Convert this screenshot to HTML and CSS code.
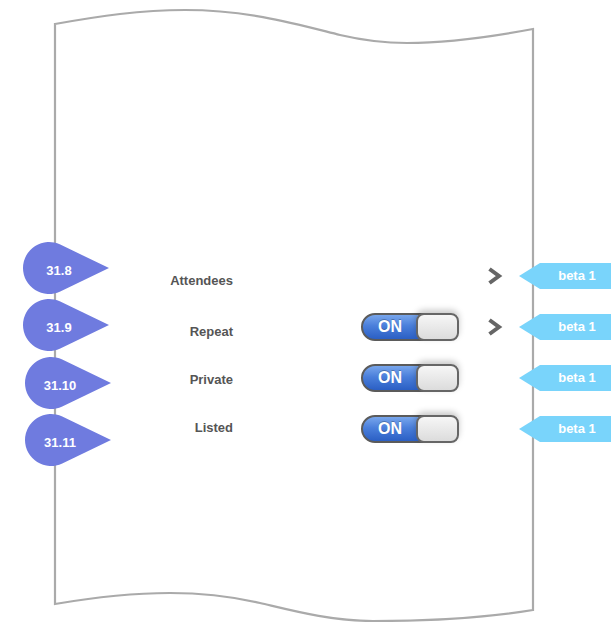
FILE: index.html
```html
<!DOCTYPE html>
<html lang="en">
<head>
<meta charset="utf-8">
<title>Event settings</title>
<link rel="stylesheet" href="styles.css">
</head>
<body>
<div class="canvas">
  <svg class="paper" width="611" height="622" viewBox="0 0 611 622" aria-hidden="true">
    <path d="M55,24 C100,16 140,10 185,10 C250,10 300,25 340,35 C370,42 390,43 407,43 C450,43 490,37 533,29 L533,610 C490,617 440,621 373,621 C330,621 290,610 260,603 C230,596 200,593 170,593 C130,593 90,598 55,604 Z" fill="#fff" stroke="#aaaaaa" stroke-width="2.2"/>
  </svg>

  <div class="rows">
    <div class="row">
      <span class="label label-r1">Attendees</span>
      <svg class="chevron" width="16" height="18" viewBox="0 0 16 18"><polyline points="2.5,2 12,9 2.5,16" fill="none" stroke="#666" stroke-width="4"/></svg>
      <span class="tag"><svg width="92" height="26" viewBox="0 0 92 26"><polygon points="0,13 21,0 92,0 92,26 21,26" fill="#79d4fb"/></svg><span class="tag-text">beta 1</span></span>
    </div>
    <div class="row">
      <span class="label label-r2">Repeat</span>
      <span class="toggle"><span class="toggle-on">ON</span><span class="knob"></span></span>
      <svg class="chevron" width="16" height="18" viewBox="0 0 16 18"><polyline points="2.5,2 12,9 2.5,16" fill="none" stroke="#666" stroke-width="4"/></svg>
      <span class="tag"><svg width="92" height="26" viewBox="0 0 92 26"><polygon points="0,13 21,0 92,0 92,26 21,26" fill="#79d4fb"/></svg><span class="tag-text">beta 1</span></span>
    </div>
    <div class="row">
      <span class="label label-r3">Private</span>
      <span class="toggle"><span class="toggle-on">ON</span><span class="knob"></span></span>
      <span class="tag"><svg width="92" height="26" viewBox="0 0 92 26"><polygon points="0,13 21,0 92,0 92,26 21,26" fill="#79d4fb"/></svg><span class="tag-text">beta 1</span></span>
    </div>
    <div class="row">
      <span class="label label-r4">Listed</span>
      <span class="toggle"><span class="toggle-on">ON</span><span class="knob"></span></span>
      <span class="tag"><svg width="92" height="26" viewBox="0 0 92 26"><polygon points="0,13 21,0 92,0 92,26 21,26" fill="#79d4fb"/></svg><span class="tag-text">beta 1</span></span>
    </div>
  </div>

  <svg class="drop drop-1" width="90" height="54" viewBox="0 0 90 54"><path d="M87,27 L38.27,3.57 A26,26 0 1 0 38.27,50.43 Z" fill="#6f7bdf"/><text x="37" y="33.5" text-anchor="middle">31.8</text></svg>
  <svg class="drop drop-2" width="90" height="54" viewBox="0 0 90 54"><path d="M87,27 L38.27,3.57 A26,26 0 1 0 38.27,50.43 Z" fill="#6f7bdf"/><text x="37" y="33.5" text-anchor="middle">31.9</text></svg>
  <svg class="drop drop-3" width="90" height="54" viewBox="0 0 90 54"><path d="M87,27 L38.27,3.57 A26,26 0 1 0 38.27,50.43 Z" fill="#6f7bdf"/><text x="36" y="33.5" text-anchor="middle">31.10</text></svg>
  <svg class="drop drop-4" width="90" height="54" viewBox="0 0 90 54"><path d="M87,27 L38.27,3.57 A26,26 0 1 0 38.27,50.43 Z" fill="#6f7bdf"/><text x="36" y="33.5" text-anchor="middle">31.11</text></svg>
</div>
</body>
</html>
```

FILE: styles.css
```css
html, body {
  margin: 0;
  padding: 0;
  background: #fff;
}

body {
  font-family: "Liberation Sans", Arial, sans-serif;
}

.canvas {
  position: relative;
  width: 611px;
  height: 622px;
  overflow: hidden;
}

.paper {
  position: absolute;
  left: 0;
  top: 0;
  z-index: 0;
}

.rows {
  position: relative;
  z-index: 1;
  padding-top: 251px;
  display: flex;
  flex-direction: column;
  gap: 1px;
}

.row {
  display: grid;
  grid-template-columns: 233px 128px 98px 28px 16px 16px 92px;
  height: 50px;
  align-items: center;
}

.label {
  grid-column: 1;
  justify-self: end;
  font-size: 13px;
  font-weight: bold;
  color: #555;
}

.label-r1 { padding-top: 8px; }
.label-r2 { padding-top: 9px; }
.label-r3 { padding-top: 3px; }
.label-r4 { padding-bottom: 3px; }

.toggle {
  grid-column: 3;
  position: relative;
  display: flex;
  align-items: center;
  box-sizing: border-box;
  width: 98px;
  height: 28px;
  border: 2px solid #5b5b5b;
  border-radius: 14px;
  background: linear-gradient(#78a6ec 0%, #4a7fdb 45%, #2b5fc4 100%);
}

.toggle-on {
  padding-left: 15px;
  font-size: 16px;
  font-weight: bold;
  color: #fff;
  text-shadow: 0 -1px 0 rgba(0, 0, 0, 0.25);
}

.knob {
  position: absolute;
  right: -2px;
  top: -2px;
  box-sizing: border-box;
  width: 43px;
  height: 28px;
  border: 2px solid #666;
  border-radius: 8px;
  background: linear-gradient(#f6f6f6, #dcdcdc);
  box-shadow: 0 -3px 6px rgba(0, 0, 0, 0.22);
}

.chevron {
  grid-column: 5;
  display: block;
}

.tag {
  grid-column: 7;
  position: relative;
  display: block;
  width: 92px;
  height: 26px;
}

.tag svg {
  display: block;
}

.tag-text {
  position: absolute;
  left: 24px;
  right: 0;
  top: 0;
  line-height: 26px;
  text-align: center;
  font-size: 13px;
  font-weight: bold;
  color: #fff;
}

.drop {
  position: absolute;
  z-index: 2;
  display: block;
}

.drop text {
  font-family: "Liberation Sans", Arial, sans-serif;
  font-size: 13px;
  font-weight: bold;
  fill: #fff;
}

.drop-1 { left: 22px; top: 241px; }
.drop-2 { left: 22px; top: 298px; }
.drop-3 { left: 24px; top: 356px; }
.drop-4 { left: 24px; top: 413px; }
```
